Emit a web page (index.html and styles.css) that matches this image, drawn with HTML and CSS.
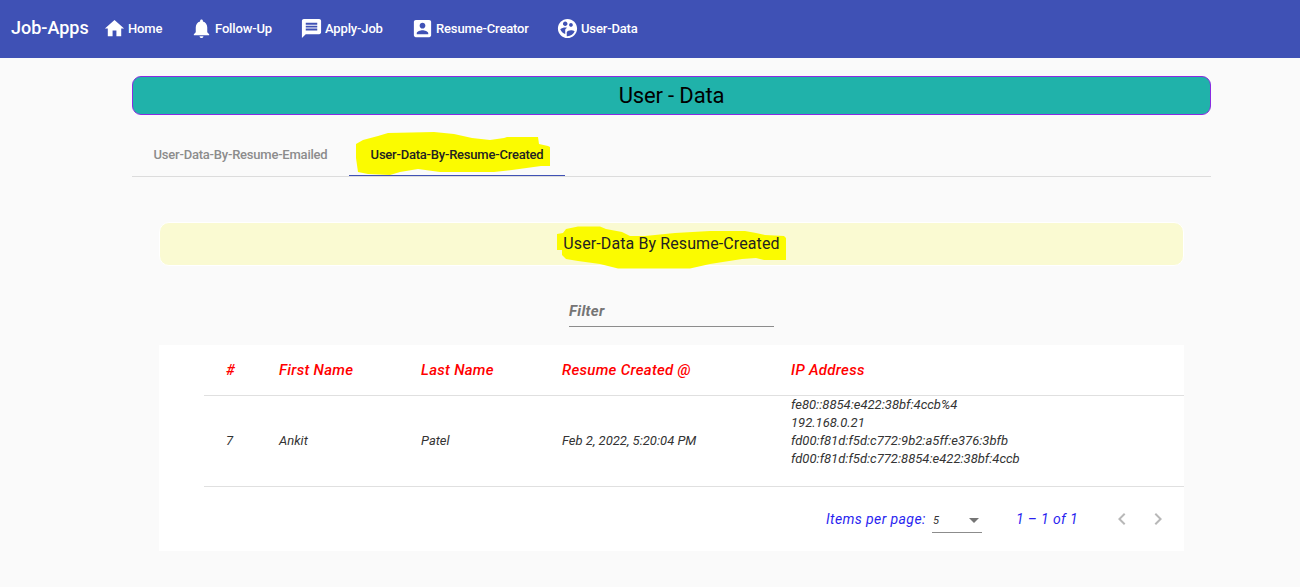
FILE: index.html
```html
<!DOCTYPE html>
<html lang="en">
<head>
<meta charset="utf-8">
<title>Job-Apps</title>
<link rel="stylesheet" href="styles.css">
</head>
<body>
<nav class="toolbar">
  <span class="brand">Job-Apps</span>
  <a class="link home"><svg class="icon" viewBox="0 0 24 24"><path d="M10 20v-6h4v6h5v-8h3L12 3 2 12h3v8z"/></svg><span>Home</span></a>
  <a class="link follow"><svg class="icon" viewBox="0 0 24 24"><path d="M12 22c1.100 0 2-.9 2-2h-4c0 1.100.9 2 2 2zm6-6v-5c0-3.070-1.630-5.640-4.500-6.320V4c0-.83-.67-1.500-1.500-1.500s-1.500.67-1.500 1.500v.68C7.640 5.360 6 7.920 6 11v5l-2 2v1h16v-1l-2-2z"/></svg><span>Follow-Up</span></a>
  <a class="link apply"><svg class="icon" viewBox="0 0 24 24"><path d="M20 2H4c-1.100 0-1.990.9-1.990 2L2 22l4-4h14c1.100 0 2-.9 2-2V4c0-1.100-.9-2-2-2zM6 9h12v2H6V9zm12 5H6v-2h12v2zm0-6H6V6h12v2z"/></svg><span>Apply-Job</span></a>
  <a class="link resume"><svg class="icon" viewBox="0 0 24 24"><path d="M3 5v14c0 1.100.89 2 2 2h14c1.100 0 2-.9 2-2V5c0-1.100-.9-2-2-2H5c-1.110 0-2 .9-2 2zm12 4c0 1.660-1.340 3-3 3s-3-1.340-3-3 1.340-3 3-3 3 1.340 3 3zm-9 8c0-2 4-3.100 6-3.100s6 1.100 6 3.100v1H6v-1z"/></svg><span>Resume-Creator</span></a>
  <a class="link users"><svg class="icon" viewBox="0 0 24 24"><path fill-rule="evenodd" d="M12 2C6.480 2 2 6.480 2 12s4.480 10 10 10 10-4.480 10-10S17.520 2 12 2zm3.610 4.340c1.070 0 1.930.86 1.930 1.930s-.86 1.930-1.930 1.930-1.930-.86-1.930-1.930c-.01-1.070.86-1.930 1.930-1.930zm-6-1.580c1.300 0 2.360 1.060 2.360 2.360S10.910 9.480 9.610 9.480 7.250 8.420 7.250 7.120s1.050-2.360 2.360-2.360zm0 9.130v3.750c-2.400-.75-4.300-2.600-5.140-4.960 1.050-1.120 3.670-1.690 5.140-1.690.53 0 1.200.08 1.900.22-1.640.87-1.900 2.020-1.900 2.680zM12 20c-.27 0-.53-.01-.79-.04v-4.070c0-1.420 2.940-2.130 4.400-2.130 1.070 0 2.920.39 3.840 1.150C18.280 17.880 15.390 20 12 20z"/></svg><span>User-Data</span></a>
</nav>
<main class="content">
  <h1 class="banner">User - Data</h1>
  <div class="tabs">
    <div class="tab"><span class="label">User-Data-By-Resume-Emailed</span></div>
    <div class="tab active">
      <svg class="marker tab-marker" viewBox="0 0 216 44"><path d="M7 12L14 8L29 4L39 1L85 0L105 2L123 6L141 8L155 6L158 5H189L190 12L199 14L201 15V34H192L163 38L145 40H91L69 37L51 40L41 43L19 42L9 40L7 26Z"/></svg>
      <span class="label">User-Data-By-Resume-Created</span>
    </div>
  </div>
  <section class="panel">
    <h2 class="subbanner">
      <svg class="marker title-marker" viewBox="557 226 229 43"><path d="M557 234L563 233L566 229L578 226.500H600L606 229L622 232L630 236H645L675 233L710 231H745L756 233L765 235L784 236L786 238V260H764L756 258L742 259L710 264L690 268.500H618L600 264L578 261L566 259L562 255V250H557Z"/></svg>
      <span class="title">User-Data By Resume-Created</span>
    </h2>
    <div class="filter">Filter</div>
    <div class="card">
      <table class="grid">
        <thead><tr><th class="c-num">#</th><th class="c-first">First Name</th><th class="c-last">Last Name</th><th class="c-date">Resume Created @</th><th>IP Address</th></tr></thead>
        <tbody><tr><td class="c-num">7</td><td>Ankit</td><td>Patel</td><td>Feb 2, 2022, 5:20:04 PM</td><td class="ips">fe80::8854:e422:38bf:4ccb%4<br>192.168.0.21<br>fd00:f81d:f5d:c772:9b2:a5ff:e376:3bfb<br>fd00:f81d:f5d:c772:8854:e422:38bf:4ccb</td></tr></tbody>
      </table>
      <div class="paginator">
        <span class="per-page">Items per page:</span>
        <span class="select"><span>5</span><i class="caret"></i></span>
        <span class="range">1 – 1 of 1</span>
        <svg class="arrow" viewBox="0 0 24 24"><path d="M15.410 7.410L14 6l-6 6 6 6 1.410-1.410L10.830 12z"/></svg>
        <svg class="arrow next" viewBox="0 0 24 24"><path d="M10 6L8.590 7.410 13.170 12l-4.580 4.590L10 18l6-6z"/></svg>
      </div>
    </div>
  </section>
</main>
</body>
</html>
```
FILE: styles.css
```css
* { box-sizing: border-box; }
body {
  margin: 0;
  height: 587px;
  overflow: hidden;
  background: #fafafa;
  font-family: Roboto, "Liberation Sans", sans-serif;
}
.toolbar {
  display: flex;
  align-items: center;
  height: 58px;
  padding: 0 0 2px 11px;
  background: #3f51b5;
  color: #fff;
}
.brand { width: 92px; font-size: 18px; font-weight: 500; line-height: 24px; }
.link {
  display: flex;
  align-items: center;
  flex: none;
  gap: 2px;
  height: 24px;
  font-size: 13px;
  font-weight: 500;
  letter-spacing: -0.15px;
  white-space: nowrap;
}
.home { width: 87px; }
.follow { width: 110px; }
.apply { width: 111px; }
.resume { width: 145px; }
.icon { width: 23px; height: 23px; fill: currentColor; flex: none; }
.content { width: 1079px; margin: 18px 0 0 132px; }
.banner {
  margin: 0;
  height: 39px;
  border: 1px solid blueviolet;
  border-radius: 9px;
  background: lightseagreen;
  color: #000;
  font-size: 22px;
  font-weight: 400;
  letter-spacing: -0.15px;
  line-height: 37px;
  text-align: center;
}
.tabs {
  display: flex;
  height: 45px;
  margin-top: 17px;
  border-bottom: 1px solid #dcdcdc;
}
.tab {
  position: relative;
  display: flex;
  align-items: center;
  justify-content: center;
  width: 217px;
  height: 44px;
  font-size: 13px;
  font-weight: 500;
  letter-spacing: -0.22px;
  color: #8c8c8c;
  white-space: nowrap;
}
.tab.active { width: 216px; padding-top: 1px; color: #222; border-bottom: 1px solid #3f51b5; }
.label { position: relative; }
.marker { position: absolute; fill: #fbfb00; }
.tab-marker { left: 0; top: 0; width: 216px; height: 44px; }
.panel { padding: 45px 27px 0; }
.subbanner {
  position: relative;
  margin: 0;
  height: 44px;
  border: 1px solid #fff;
  border-radius: 10px;
  background: lightgoldenrodyellow;
  color: #222;
  font-size: 16px;
  font-weight: 400;
  letter-spacing: 0.1px;
  line-height: 42px;
  text-align: center;
}
.title-marker { left: 397px; top: 3px; width: 229px; height: 43px; }
.title { position: relative; }
.filter {
  width: 205px;
  height: 27px;
  margin: 34px 0 0 410px;
  border-bottom: 1px solid #8c8c8c;
  color: #757575;
  font-size: 15px;
  font-weight: 700;
  font-style: italic;
  letter-spacing: 0.3px;
  line-height: 22px;
}
.card { width: 1025px; height: 206px; margin-top: 18px; background: #fff; }
.grid {
  width: 980px;
  margin-left: 45px;
  border-collapse: separate;
  border-spacing: 0;
  table-layout: fixed;
  font-style: italic;
}
.grid th, .grid td { padding: 0; text-align: left; border-bottom: 1px solid #e0e0e0; white-space: nowrap; }
.grid th { height: 51px; color: red; font-size: 15px; font-weight: 500; letter-spacing: 0.28px; }
.grid td { height: 91px; color: #333; font-size: 13px; line-height: 18px; font-weight: 400; }
.grid .c-num { width: 75px; padding-left: 22px; }
.grid .c-first { width: 142px; }
.grid .c-last { width: 141px; }
.grid .c-date { width: 229px; }
.grid .ips { padding-bottom: 18px; }
.paginator {
  display: flex;
  align-items: center;
  height: 64px;
  padding-left: 667px;
  color: #2a1ff0;
  font-size: 14px;
  font-style: italic;
  letter-spacing: 0.4px;
}
.per-page { width: 106px; white-space: nowrap; }
.select {
  display: flex;
  align-items: center;
  justify-content: space-between;
  width: 50px;
  height: 26px;
  padding: 1px 3px 0 1px;
  margin-top: 2px;
  border-bottom: 1px solid #8c8c8c;
  color: #333;
  font-size: 11px;
}
.caret { border: 5px solid transparent; border-top-color: #757575; border-bottom: 0; }
.range { width: 94px; margin-left: 34px; }
.arrow { width: 24px; height: 24px; fill: #b8b8b8; }
.next { margin-left: 12px; }
```
